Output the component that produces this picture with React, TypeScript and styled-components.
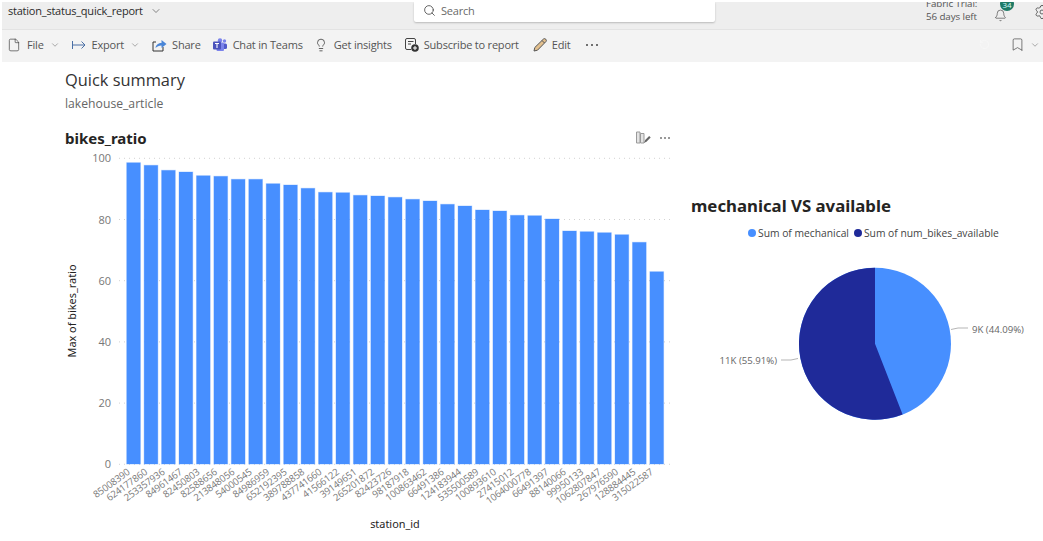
import styled, { createGlobalStyle } from "styled-components";
import { Bookmark, ChevronDown, File, Lightbulb, RotateCcw, Search, Settings, Bell } from "lucide-react";

const GlobalStyle = createGlobalStyle`
  html, body {
    margin: 0;
    height: 100%;
    background: #fff;
    overflow: hidden;
  }
  body {
    font-family: "Open Sans", "Noto Sans", sans-serif;
  }
`;

const Page = styled.div`
  width: 1043px;
  height: 541px;
  padding: 2px 0 0 2px;
  box-sizing: border-box;
  overflow: hidden;
`;

const TopBar = styled.header`
  display: flex;
  height: 27px;
  background: #eeeeee;
  border-bottom: 1px solid #e3e3e3;
  overflow: hidden;
`;

const ReportName = styled.div`
  flex: none;
  width: 412px;
  box-sizing: border-box;
  padding: 0 0 0 6px;
  height: 17px;
  display: flex;
  align-items: center;
  gap: 7px;
  font-size: 11px;
  letter-spacing: -0.22px;
  color: #2b2b2b;
  white-space: nowrap;
`;

const SearchBox = styled.div`
  flex: none;
  width: 301px;
  height: 20px;
  background: #fff;
  border-radius: 0 0 2px 2px;
  box-shadow: 0 1px 2px rgba(0, 0, 0, 0.22);
  display: flex;
  align-items: center;
  gap: 5px;
  padding: 0 0 3px 9px;
  box-sizing: border-box;
  font-size: 11px;
  letter-spacing: -0.2px;
  color: #6a6a6a;
`;

const TopRight = styled.div`
  flex: none;
  display: flex;
  align-items: flex-start;
  padding-left: 211px;
  color: #555;
`;

const TrialText = styled.div`
  flex: none;
  width: 51px;
  margin-top: -5px;
  font-size: 9.8px;
  line-height: 13px;
  letter-spacing: -0.1px;
  white-space: nowrap;
  color: #555;
`;

const BellWrap = styled.div`
  flex: none;
  position: relative;
  margin: 3px 0 0 17px;
  width: 13px;
  height: 14px;
`;

const Badge = styled.span`
  position: absolute;
  left: 6px;
  top: -8px;
  width: 14px;
  height: 14px;
  border-radius: 50%;
  background: #1f7a66;
  color: #dff;
  font-size: 8px;
  line-height: 16px;
  text-align: center;
`;

const GearWrap = styled.div`
  flex: none;
  margin: 1px 0 0 27px;
`;

const Toolbar = styled.nav`
  display: flex;
  align-items: center;
  box-sizing: border-box;
  height: 32px;
  background: #f3f3f3;
  padding: 0 3px 3px 5px;
`;

const ToolButton = styled.div<{ $gap?: number; $after?: number }>`
  display: flex;
  align-items: center;
  gap: ${(p) => p.$gap ?? 6}px;
  margin-right: ${(p) => p.$after ?? 12}px;
  font-size: 11px;
  letter-spacing: -0.2px;
  color: #555;
  white-space: nowrap;
`;

const Chevron = styled(ChevronDown)`
  color: #666;
`;

const Dots = styled.span`
  display: flex;
  gap: 3px;
  margin-left: 2px;
  i {
    width: 2px;
    height: 2px;
    border-radius: 50%;
    background: #444;
  }
`;

const ToolEnd = styled.div`
  margin-left: auto;
  display: flex;
  align-items: center;
  gap: 5px;
`;

const UndoIcon = styled(RotateCcw)`
  margin-right: 15px;
  color: #fafafa;
`;

const Canvas = styled.main`
  display: grid;
  grid-template-columns: 623px 1fr;
  padding-left: 58px;
`;

const LeftColumn = styled.section`
  display: flex;
  flex-direction: column;
`;

const ReportHead = styled.div`
  padding: 6px 0 0 5px;
  height: 58px;
  box-sizing: border-box;
`;

const Heading = styled.h1`
  margin: 0;
  font-size: 16.4px;
  line-height: 24px;
  font-weight: 400;
  color: #333;
`;

const Subheading = styled.div`
  font-size: 12.2px;
  line-height: 24px;
  color: #666;
`;

const VisualHead = styled.div`
  display: flex;
  align-items: center;
  justify-content: space-between;
  box-sizing: border-box;
  height: 30px;
  padding: 5px 13px 0 5px;
`;

const VisualTitle = styled.h2`
  margin: 0;
  font-family: "Noto Sans", sans-serif;
  font-size: 15px;
  font-weight: 700;
  color: #252423;
`;

const VisualIcons = styled.div`
  display: flex;
  align-items: center;
  gap: 9px;
  i {
    width: 2px;
    height: 2px;
    border-radius: 50%;
    background: #777;
  }
`;

const MiniDots = styled.span`
  display: flex;
  gap: 2px;
`;

const ChartSvg = styled.svg`
  display: block;
`;

const PieSvg = styled.svg`
  display: block;
  margin-top: 10px;
`;

const Bar = styled.rect`
  fill: #478fff;
  stroke: rgba(71, 143, 255, 0.32);
  stroke-width: 1;
`;

const GridLine = styled.line`
  stroke: #d2d2d2;
  stroke-width: 1;
  stroke-dasharray: 1 4;
`;

const AxisLabel = styled.text`
  font-family: "Open Sans", sans-serif;
  font-size: 11px;
  fill: #777;
  text-anchor: end;
`;

const TickLabel = styled.text`
  font-family: "Open Sans", sans-serif;
  font-size: 9.6px;
  letter-spacing: -0.2px;
  fill: #7a7a7a;
  text-anchor: end;
`;

const AxisTitle = styled.text`
  font-family: "Noto Sans", sans-serif;
  font-size: 10.9px;
  fill: #252423;
  text-anchor: middle;
`;

const RightColumn = styled.section`
  display: flex;
  flex-direction: column;
  padding: 132px 0 0 8px;
`;

const PieTitle = styled.h2`
  margin: 0;
  font-family: "Noto Sans", sans-serif;
  font-size: 16.8px;
  line-height: 24px;
  font-weight: 700;
  color: #252423;
  white-space: nowrap;
`;

const Legend = styled.div`
  display: flex;
  align-items: center;
  margin: 8px 0 0 57px;
  height: 14px;
  font-size: 10.3px;
  color: #444;
  white-space: nowrap;
`;

const LegendItem = styled.span<{ $color: string }>`
  display: flex;
  align-items: center;
  gap: 2px;
  margin-right: 5px;
  &::before {
    content: "";
    width: 8px;
    height: 8px;
    border-radius: 50%;
    background: ${(p) => p.$color};
  }
`;

const PieLabel = styled.text<{ $end?: boolean }>`
  font-family: "Open Sans", sans-serif;
  font-size: 9.6px;
  fill: #666;
  text-anchor: ${(p) => (p.$end ? "end" : "start")};
`;

const Leader = styled.polyline`
  fill: none;
  stroke: #b5b5b5;
  stroke-width: 1;
`;

const stations = [
  ["85008390", 162.7], ["624177860", 165.3], ["253357936", 170.3], ["84961467", 172],
  ["82450803", 175.7], ["82588656", 176.3], ["213848056", 179.3], ["54000545", 179.3],
  ["84986959", 183.7], ["652192395", 185], ["389788858", 188.3], ["437741660", 192.3],
  ["41566122", 192.7], ["39149651", 195.3], ["265201872", 196], ["82423726", 197.3],
  ["98187918", 199.3], ["100863462", 201], ["66491386", 204.3], ["124183944", 206],
  ["535500589", 210], ["100893610", 211], ["27415012", 215.3], ["1064000778", 215.7],
  ["66491397", 219], ["88140066", 231], ["99950133", 231.7], ["1062807847", 232.7],
  ["267976590", 234.7], ["128884445", 242.3], ["315022587", 271.7],
] as const;

const ticks = [100, 80, 60, 40, 20, 0];
const yFor = (v: number) => 464.3 - v * 3.06;

function ExportIcon() {
  return (
    <svg width="14" height="10" viewBox="0 0 14 10" fill="none" stroke="#4a6fa5" strokeWidth="1">
      <path d="M.5 1v8M.5 5h12.500M9.500 1.500 13 5 9.500 8.500" />
    </svg>
  );
}

function ShareIcon() {
  return (
    <svg width="15" height="14" viewBox="0 0 15 14">
      <path d="M4 4H1v9h10V9" fill="none" stroke="#333" strokeWidth="1" />
      <path d="M3.500 10c.5-3.500 3-5 6-5V2l5 4-5 4V7.500C7 7.500 5 8.500 3.500 10z" fill="#4a86d8" />
    </svg>
  );
}

function TeamsIcon() {
  return (
    <svg width="14" height="14" viewBox="0 0 14 14">
      <circle cx="11.500" cy="3" r="1.700" fill="#7b83eb" />
      <rect x="9" y="5.500" width="5" height="5.500" rx="1.500" fill="#5059c9" />
      <circle cx="7" cy="2.500" r="2.200" fill="#7b83eb" />
      <rect x="3.500" y="4.500" width="7.500" height="8.500" rx="1" fill="#7b83eb" />
      <rect x="0" y="3.500" width="8" height="8" rx="1" fill="#4b53bc" />
      <path d="M2 5.500h4M4 5.500v4.500" stroke="#fff" strokeWidth="1.100" />
    </svg>
  );
}

function SubscribeIcon() {
  return (
    <svg width="14" height="14" viewBox="0 0 14 14">
      <path d="M6 11.500H2a1.500 1.500 0 0 1-1.500-1.500V2A1.500 1.500 0 0 1 2 .5h7A1.500 1.500 0 0 1 10.500 2v4" fill="none" stroke="#444" />
      <path d="M3 3.500h5.500M3 6h3" stroke="#444" />
      <circle cx="10" cy="10" r="3.800" fill="#333" />
      <path d="M8 10h4M10 8v4" stroke="#fff" />
    </svg>
  );
}

function PencilIcon() {
  return (
    <svg width="14" height="14" viewBox="0 0 14 14">
      <path d="M1 13l.8-3.500L10.500 1a1.800 1.800 0 0 1 2.500 2.500L4.500 12.200z" fill="#e3c08e" stroke="#555" strokeWidth="1" />
      <path d="M9 2.500l2.500 2.500" stroke="#555" />
    </svg>
  );
}

function VisualEditIcon() {
  return (
    <svg width="15" height="13" viewBox="0 0 15 13">
      <path d="M.5 1h3.500v11H.5zM4.500 2.500H8V12H4.500z" fill="#e4e4e4" stroke="#9a9a9a" />
      <path d="M8 12l1.200-3 4-4 1.500 1.500-4 4z" fill="#666" />
    </svg>
  );
}

export default function App() {
  const barWidth = 13.7;
  const pitch = 17.44;
  return (
    <Page>
      <GlobalStyle />
      <TopBar>
        <ReportName>
          station_status_quick_report
          <ChevronDown size={12} strokeWidth={1.4} color="#555" />
        </ReportName>
        <SearchBox>
          <Search size={13} strokeWidth={1.5} color="#444" />
          Search
        </SearchBox>
        <TopRight>
          <TrialText>
            Fabric Trial:
            <br />
            56 days left
          </TrialText>
          <BellWrap>
            <Bell size={13} strokeWidth={1.2} color="#444" />
            <Badge>34</Badge>
          </BellWrap>
          <GearWrap>
            <Settings size={16} strokeWidth={1.2} color="#444" />
          </GearWrap>
        </TopRight>
      </TopBar>
      <Toolbar>
        <ToolButton>
          <File size={14} strokeWidth={1.1} color="#333" />
          File
          <Chevron size={10} strokeWidth={1.3} />
        </ToolButton>
        <ToolButton>
          <ExportIcon />
          Export
          <Chevron size={10} strokeWidth={1.3} />
        </ToolButton>
        <ToolButton $gap={5}>
          <ShareIcon />
          Share
        </ToolButton>
        <ToolButton $gap={6} $after={11}>
          <TeamsIcon />
          Chat in Teams
        </ToolButton>
        <ToolButton $gap={6} $after={13}>
          <Lightbulb size={14} strokeWidth={1.3} color="#333" />
          Get insights
        </ToolButton>
        <ToolButton $gap={5} $after={14}>
          <SubscribeIcon />
          Subscribe to report
        </ToolButton>
        <ToolButton $gap={5} $after={13}>
          <PencilIcon />
          Edit
        </ToolButton>
        <Dots>
          <i />
          <i />
          <i />
        </Dots>
        <ToolEnd>
          <UndoIcon size={11} strokeWidth={1} />
          <Bookmark size={15} strokeWidth={1.1} color="#444" />
          <Chevron size={10} strokeWidth={1.3} />
        </ToolEnd>
      </Toolbar>
      <Canvas>
        <LeftColumn>
          <ReportHead>
            <Heading>Quick summary</Heading>
            <Subheading>lakehouse_article</Subheading>
          </ReportHead>
          <VisualHead>
            <VisualTitle>bikes_ratio</VisualTitle>
            <VisualIcons>
              <VisualEditIcon />
              <MiniDots>
                <i />
                <i />
                <i />
              </MiniDots>
            </VisualIcons>
          </VisualHead>
          <ChartSvg width="620" height="391" viewBox="60 150 620 391">
            {ticks.map((t) => (
              <g key={t}>
                <GridLine x1="119" x2="671" y1={yFor(t)} y2={yFor(t)} />
                <AxisLabel x="111" y={yFor(t) + 4}>
                  {t}
                </AxisLabel>
              </g>
            ))}
            {stations.map(([id, top], i) => {
              const x = 126.7 + i * pitch;
              const labelX = x + barWidth / 2 - 3;
              return (
                <g key={id}>
                  <Bar x={x} y={top} width={barWidth} height={464 - top} />
                  <TickLabel x={labelX} y={473.500} transform={`rotate(-36 ${labelX} 473.500)`}>
                    {id}
                  </TickLabel>
                </g>
              );
            })}
            <AxisTitle x="0" y="0" transform="translate(76 311) rotate(-90)">
              Max of bikes_ratio
            </AxisTitle>
            <AxisTitle x="395" y="528">
              station_id
            </AxisTitle>
          </ChartSvg>
        </LeftColumn>
        <RightColumn>
          <PieTitle>mechanical VS available</PieTitle>
          <Legend>
            <LegendItem $color="#478fff">Sum of mechanical</LegendItem>
            <LegendItem $color="#1f2a99">Sum of num_bikes_available</LegendItem>
          </Legend>
          <PieSvg width="352" height="190" viewBox="691 250 352 190">
            <circle cx="875" cy="343.700" r="76" fill="#478fff" />
            <path d="M875 343.700 L875 267.700 A76 76 0 1 0 902.600 414.500 Z" fill="#1f2a99" />
            <Leader points="951,329.500 958,328 968,328" />
            <PieLabel x="972" y="332.500">
              9K (44.09%)
            </PieLabel>
            <Leader points="781,360 791,360 798,358.500" />
            <PieLabel $end x="777" y="364">
              11K (55.91%)
            </PieLabel>
          </PieSvg>
        </RightColumn>
      </Canvas>
    </Page>
  );
}
